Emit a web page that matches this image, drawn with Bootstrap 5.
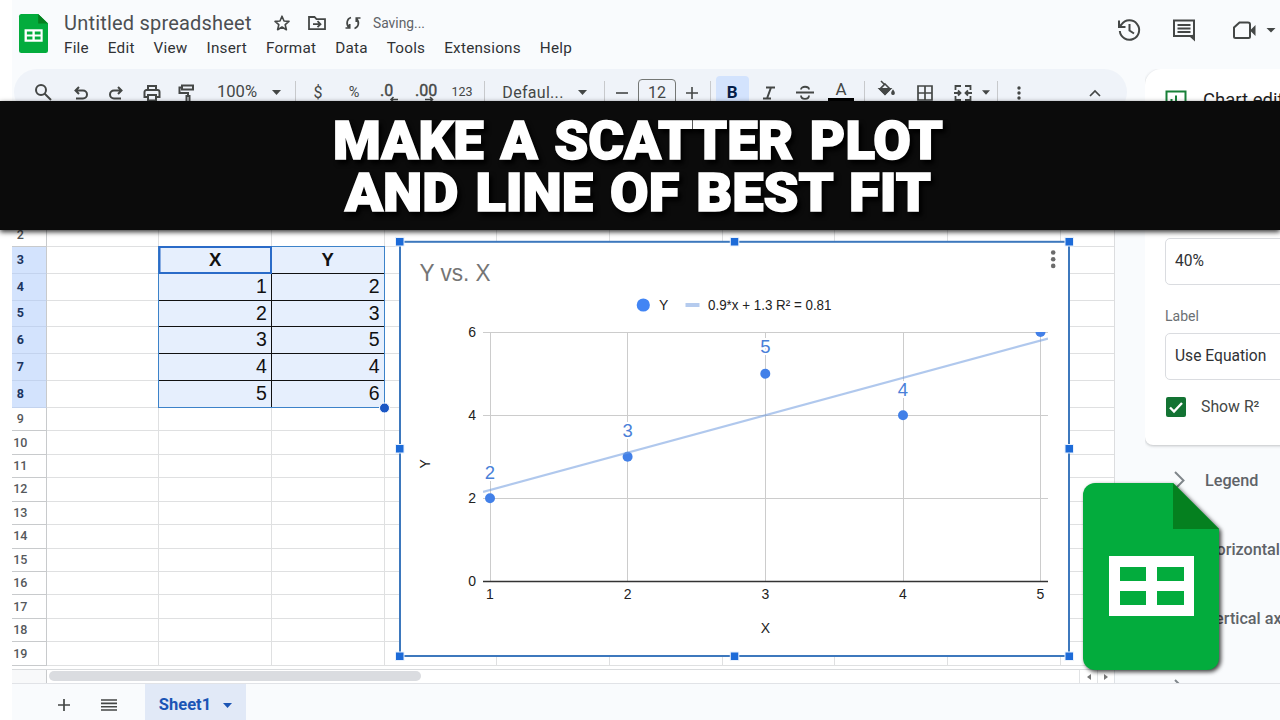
<!DOCTYPE html>
<html lang="en">
<head>
    <meta charset="UTF-8">
    <meta name="viewport" content="width=device-width, initial-scale=1.0">
    <title>Untitled spreadsheet</title>
    <link href="https://cdn.jsdelivr.net/npm/bootstrap@5.3.2/dist/css/bootstrap.min.css" rel="stylesheet">
    <script src="https://cdn.jsdelivr.net/npm/bootstrap@5.3.2/dist/js/bootstrap.bundle.min.js"></script>
    <style>
        body { font-family: Roboto, "Liberation Sans", sans-serif; background: #fff; color: #444746; }
        .page { width: 1280px; height: 720px; padding-left: 12px; }
        .app { background: #f9fbfd; height: 720px; }
        svg { display: block; flex: none; overflow: visible; }
        .ico { fill: none; stroke: #444746; stroke-width: 2; }

        /* header */
        .top-bar { height: 69px; flex: none; padding: 0 0 0 7px; }
        .doc-logo { margin-top: 14px; }
        .doc-info { margin-left: 16px; padding-top: 10px; }
        .doc-title { font-size: 20px; line-height: 26px; letter-spacing: .2px; color: #4c4f52; width: 210px; white-space: nowrap; }
        .menus { gap: 19px; font-size: 15.3px; line-height: 24px; letter-spacing: .21px; color: #303235; }
        .saving { font-size: 13.8px; color: #5f6368; margin-left: 11px; }
        .top-icons { padding-top: 18px; gap: 31px; margin-right: 2px; }
        .meet { margin-left: 6px; }
        .sync { margin-left: 18px; }

        /* toolbar */
        .tools { width: 1113px; height: 46px; margin-left: 2px; padding: 1px 0 0 8px; border-radius: 23px; background: #eff3f9; font-size: 16px; }
        .tool { height: 46px; width: 36px; display: flex; align-items: center; justify-content: center; flex: none; white-space: nowrap; }
        .t-search { width: 41px; }
        .t-edit .tool { width: 35.5px; }
        .t-style .tool { width: 36.4px; }
        .t-style .bold-on { width: 33px; }
        .t-cell .tool { width: 38px; }
        .t-zoom { width: 64px; font-size: 16.6px; }
        .t-percent { font-size: 14.5px; }
        .t-format { font-size: 12.5px; }
        .t-font { width: 84px; letter-spacing: .3px; }
        .t-caret { width: 15px; }
        .t-step { width: 26px; }
        .t-slim { width: 8px; }
        .t-up { width: 24px; margin-right: 20px; }
        .size-box { width: 38px; height: 27px; margin: 0 3px; border: 1px solid #747775; border-radius: 4px; }
        .bold-on { height: 34px; border-radius: 4px; background: #d3e3fd; color: #041e49; font-weight: 700; font-size: 17px; }
        .tb-sep { width: 1px; height: 23px; background: #c7c9cc; margin: 0 3px 0 4px; flex: none; }
        .sep-a { margin: 0 4px 0 11px; }
        .sep-b { margin: 0 6px 0 4px; }
        .sep-c { margin: 0 4px 0 14px; }
        .sep-d { margin: 0 3px 0 5px; }
        .sep-e { margin: 0 3px 0 7px; }

        /* grid */
        .left-pane { width: 1115px; }
        .sheet { width: 1103px; height: 554px; background: #fff; border-right: 1px solid #dcdddf; overflow: hidden; }
        .above-rows { height: 61.65px; }
        .grid-row { display: grid; grid-template-columns: 34.6px repeat(9, 112.67px) 1fr; height: 23.45px; }
        .grid-row.tall { height: 27px; }
        .grid-row.tall.short { height: 26px; }
        .grid-row > div { border-right: 1px solid #dfe0e1; border-bottom: 1px solid #dfe0e1; }
        .grid-row > div:last-child { border-right: 0; }
        .grid-row > .num { border-color: #c8cacc; font-size: 12.5px; font-weight: 500; color: #55585b; padding-right: 17px; display: flex; align-items: center; justify-content: center; line-height: 14px; }
        .grid-row.tall > .num { background: #d3e3fd; color: #1b3560; font-weight: 700; border-bottom-color: #c3d3ee; }
        .grid-row > .val { background: #e6effd; border-color: #111; color: #111; font: 19.5px/25px "Liberation Sans", Arial, sans-serif; text-align: right; padding-right: 4px; }
        .grid-row > .val.head { font-weight: 700; text-align: center; padding-right: 0; font-size: 18.5px; }
        .chart-box { left: 382px; top: 121px; }
        .range-box { left: 146px; top: 131px; }

        .scroll-row { height: 14px; width: 1103px; background: #fff; border-top: 1px solid #d9dbdd; }
        .scroll-corner { width: 35px; background: #f8f9fa; border-right: 1px solid #c8cacc; }
        .scroll-thumb { width: 372px; height: 10px; margin: 1px 0 0 2px; border-radius: 5px; background: #dadce0; }
        .scroll-btn { width: 18px; border-left: 1px solid #e1e3e5; }

        /* side panel */
        .side { width: 135px; height: 614px; margin-left: 18px; overflow: hidden; }
        .panel-box { width: 300px; height: 376px; background: #fff; border-radius: 16px 0 0 8px; box-shadow: 0 1px 3px rgba(60, 64, 67, .3); padding: 21px 0 0 20px; }
        .panel-title { height: 148px; font-size: 18.5px; line-height: 20px; color: #1f1f1f; gap: 16px; }
        .select-field { height: 47px; width: 220px; border: 1px solid #dadce0; border-radius: 5px; font-size: 15.6px; color: #303235; padding-left: 9px; }
        .field-name { font-size: 14px; line-height: 18px; color: #6b6f73; margin: 22px 0 8px; }
        .check { width: 20px; height: 20px; border-radius: 2px; background: #137333; margin-right: 15px; }
        .check-row { margin: 17px 0 0 1px; font-size: 15.8px; line-height: 20px; }
        .fold-list { width: 300px; height: 238px; padding-top: 1px; overflow: hidden; }
        .fold-item { height: 69.3px; padding-left: 29px; gap: 20px; font-size: 16.2px; font-weight: 500; color: #5f6368; white-space: nowrap; }

        /* bottom */
        .tabs-bar { height: 37px; flex: none; border-top: 1px solid #e1e3e7; background: #f9fbfd; padding-left: 46px; }
        .tab-icon { margin-top: 6px; }
        .all-sheets { margin-left: 31px; }
        .sheet-tab { width: 101px; height: 36px; padding-top: 6px; margin-left: 28px; gap: 12px; background: #e1e9f7; color: #1b55b5; font-size: 16.5px; font-weight: 700; }

        .banner { left: 0; top: 101px; width: 1280px; height: 129px; background: #0b0b0b; box-shadow: 0 2px 5px rgba(0, 0, 0, .8); }
        .banner text { font-family: Roboto, "Liberation Sans", sans-serif; font-weight: 900; font-size: 54px; word-spacing: 3px; fill: #fff; stroke: #fff; stroke-width: 1.6; }
        .banner svg { filter: drop-shadow(3px 4px 2px #000); }
        .big-logo { left: 1083px; top: 483px; filter: drop-shadow(2px 2px 2px rgba(0, 0, 0, .75)); }
        .chart-box text { font-family: "Liberation Sans", Arial, sans-serif; font-size: 14px; fill: #222; }
        .chart-box .pt-label { font-size: 18.5px; fill: #4a80d8; stroke: #fff; stroke-width: 4px; paint-order: stroke; }
        .chart-box .chart-title { font-size: 24px; fill: #757575; }
    </style>
</head>
<body>
<div class="page position-relative overflow-hidden">
    <div class="app d-flex flex-column overflow-hidden">

        <header class="top-bar d-flex align-items-start">
            <svg class="doc-logo" width="29" height="39" viewBox="0 0 136 187" preserveAspectRatio="none">
                <path d="M12 0H90L136 46V175a12 12 0 0 1-12 12H12A12 12 0 0 1 0 175V12A12 12 0 0 1 12 0Z" fill="#03ac3d"/>
                <path d="M90 0L136 46H90Z" fill="#05801f"/>
                <path d="M26 73H111V133H26ZM37 84V98H63V84ZM74 84V98H101V84ZM37 108V122H63V108ZM74 108V122H101V108Z" fill="#fff" fill-rule="evenodd"/>
            </svg>
            <div class="doc-info">
                <div class="d-flex align-items-center">
                    <div class="doc-title">Untitled spreadsheet</div>
                    <svg class="ico" width="16" height="16" viewBox="0 0 16 16" stroke-linejoin="round"><path stroke-width="1.6" d="M8 1.2L10 6l5 .4-3.8 3.3 1.2 5L8 12l-4.4 2.7 1.2-5L1 6.4 6 6Z"/></svg>
                    <svg class="ico ms-3" width="20" height="16" viewBox="0 0 20 16"><path stroke-width="1.8" d="M3 2h5.500l2 2.200h8.500V14.200H3ZM7 9.200h7M11.500 6.200l3 3-3 3"/></svg>
                    <svg class="ico sync" width="18" height="16" viewBox="0 0 18 16"><path stroke-width="1.7" d="M7 2.500C3 3.500 1.600 9 5 12.500M1.500 13h4.200V9M10.500 13.500c4-1 5.400-6.500 2-10M16.500 3h-4.200v4"/></svg>
                    <span class="saving">Saving...</span>
                </div>
                <nav class="menus d-flex">
                    <span>File</span><span>Edit</span><span>View</span><span>Insert</span><span>Format</span><span>Data</span><span>Tools</span><span>Extensions</span><span>Help</span>
                </nav>
            </div>
            <div class="top-icons d-flex align-items-center ms-auto">
                <svg class="ico" width="24" height="24" viewBox="0 0 24 24"><path d="M2.800 13A9.700 9.700 0 1 0 4.500 6.500L2 9M2 2.500V9h6.500M12.500 6v6.500l4.500 3"/></svg>
                <svg class="ico" width="24" height="24" viewBox="0 0 24 24"><path d="M2 2.500H22V20L19.500 18H2ZM5.500 7h13M5.500 10.500h13M5.500 14h13"/><path d="M17 18l6 5.500V16Z" fill="#444746" stroke="none"/></svg>
                <div class="meet d-flex align-items-center">
                    <svg class="ico" width="22" height="24" viewBox="0 0 22 24"><path d="M6.500 4.500H15a2 2 0 0 1 2 2v12a1.500 1.500 0 0 1-1.500 1.500H2.500A1.500 1.500 0 0 1 1 18.500V9.500Z"/><path d="M17 12.500l5.500-5.500v11Z" fill="#444746" stroke="none"/></svg>
                    <svg class="ms-2" width="15" height="6" viewBox="0 0 15 6"><path d="M3.500 1H12.500L8 5.500Z" fill="#444746"/></svg>
                </div>
            </div>
        </header>

        <div class="d-flex flex-grow-1">
            <main class="left-pane">
                <div class="tools d-flex align-items-center">
                    <div class="tool t-search"><svg class="ico" width="18" height="18" viewBox="0 0 18 18"><circle cx="7" cy="6" r="5"/><path d="M10.500 9.500L17 16"/></svg></div>
                    <div class="t-edit d-flex">
                        <div class="tool"><svg class="ico" width="16" height="14" viewBox="0 0 16 14"><path d="M6 1L2.500 4.500 6 8M3 4.500H10a4 4 0 0 1 0 8H3"/></svg></div>
                        <div class="tool"><svg class="ico" width="16" height="14" viewBox="0 0 16 14"><path d="M10 1l3.500 3.500L10 8M13 4.500H6a4 4 0 0 0 0 8h7"/></svg></div>
                        <div class="tool"><svg class="ico" width="18" height="18" viewBox="0 0 18 18"><path d="M5 6V2H13V6M5 13H1.500V8a2 2 0 0 1 2-2H14.500a2 2 0 0 1 2 2v5H13M5 11H13V16.500H5Z"/></svg></div>
                        <div class="tool"><svg class="ico" width="18" height="18" viewBox="0 0 18 18"><path d="M4 1.500H15V5.500H4ZM4 3.500H1.500V9H10V12M8.500 12h3v7h-3Z"/></svg></div>
                    </div>
                    <div class="tool t-zoom">100%</div>
                    <div class="tool t-caret"><svg width="9" height="5" viewBox="0 0 9 5"><path d="M0 0H9L4.500 5Z" fill="#444746"/></svg></div>
                    <div class="tb-sep sep-a"></div>
                    <div class="tool">$</div>
                    <div class="tool t-percent">%</div>
                    <div class="tool"><svg class="ico" width="20" height="20" viewBox="0 0 20 20"><text x="0" y="13" font-size="16" fill="#444746" stroke="#444746" stroke-width=".4">.0</text><path stroke-width="1.6" d="M18 16.500H11M13.500 14l-2.500 2.500 2.500 2.500"/></svg></div>
                    <div class="tool"><svg class="ico" width="22" height="20" viewBox="0 0 22 20"><text x="0" y="13" font-size="16" fill="#444746" stroke="#444746" stroke-width=".4">.00</text><path stroke-width="1.6" d="M10 16.500h8M15 14l2.500 2.500-2.500 2.500"/></svg></div>
                    <div class="tool t-format">123</div>
                    <div class="tb-sep sep-b"></div>
                    <div class="tool t-font">Defaul...</div>
                    <div class="tool t-caret"><svg width="9" height="5" viewBox="0 0 9 5"><path d="M0 0H9L4.500 5Z" fill="#444746"/></svg></div>
                    <div class="tb-sep sep-c"></div>
                    <div class="tool t-step"><svg class="ico" width="12" height="12" viewBox="0 0 12 12"><path stroke-width="1.6" d="M0 6H12"/></svg></div>
                    <div class="tool size-box">12</div>
                    <div class="tool t-step"><svg class="ico" width="12" height="12" viewBox="0 0 12 12"><path stroke-width="1.6" d="M0 6H12M6 0V12"/></svg></div>
                    <div class="tb-sep sep-d"></div>
                    <div class="t-style d-flex">
                        <div class="tool"><div class="tool bold-on">B</div></div>
                        <div class="tool"><svg class="ico" width="14" height="14" viewBox="0 0 14 14"><path d="M4 1.500H13M1 12.500H9M9 1.500L5 12.500"/></svg></div>
                        <div class="tool"><svg class="ico" width="18" height="16" viewBox="0 0 18 16"><path stroke-width="1.8" d="M0 7.500H18M5 4.500C5 .8 13 .8 13 4.500M5 10.500c0 4.500 8 4.500 8 0"/></svg></div>
                        <div class="tool"><svg width="26" height="26" viewBox="0 0 26 26"><text x="13" y="14.500" text-anchor="middle" font-size="17" fill="#444746">A</text><rect y="18" width="26" height="5"/></svg></div>
                    </div>
                    <div class="tb-sep"></div>
                    <div class="t-cell d-flex">
                        <div class="tool"><svg class="ico" width="18" height="24" viewBox="0 0 18 24"><path stroke-width="1.6" d="M3 0l3 3M7 3l5 5-5 5-5-5Z"/><path d="M2 8H12L7 13ZM15 10c3 4-3 4 0 0Z" fill="#444746"/></svg></div>
                        <div class="tool"><svg class="ico" width="16" height="16" viewBox="0 0 16 16"><path stroke-width="1.7" d="M1 1H15V15H1ZM8 1V15M1 8H15"/></svg></div>
                        <div class="tool"><svg class="ico" width="18" height="16" viewBox="0 0 18 16"><path stroke-width="1.8" d="M7 1H1.500V5M11 1h5.500V5M7 15H1.500V11M11 15h5.500V11M0 8H6M18 8H12M4 5.500L6.500 8 4 10.500M14 5.500L11.500 8l2.500 2.500"/></svg></div>
                    </div>
                    <div class="tool t-slim"><svg width="8" height="5" viewBox="0 0 9 5"><path d="M0 0H9L4.500 5Z" fill="#444746"/></svg></div>
                    <div class="tb-sep sep-e"></div>
                    <div class="tool"><svg width="4" height="14" viewBox="0 0 4 14" fill="#444746"><circle cx="2" cy="2" r="1.700"/><circle cx="2" cy="7" r="1.700"/><circle cx="2" cy="12" r="1.700"/></svg></div>
                    <div class="tool t-up ms-auto"><svg class="ico" width="12" height="8" viewBox="0 0 12 8"><path stroke-width="1.7" d="M1 7l5-5 5 5"/></svg></div>
                </div>

                <div class="sheet position-relative">
                    <div class="above-rows"></div>
                    <div id="rows"></div>

                    <!-- outline of the selected range -->
                    <svg class="range-box position-absolute" width="232" height="168" viewBox="158 246 232 168">
                        <rect x="158.500" y="246.500" width="226" height="161" fill="none" stroke="#3c82c9"/>
                        <rect x="159.500" y="247" width="111.500" height="26" fill="none" stroke="#2a6bc8" stroke-width="2"/>
                        <circle cx="384.500" cy="408" r="5" fill="#1a56c4" stroke="#fff"/>
                    </svg>

                    <svg class="chart-box position-absolute" width="681" height="426" viewBox="394 236 681 426">
                        <rect x="400" y="241.800" width="669" height="414.200" fill="#fff" stroke="#3d78bd" stroke-width="2"/>
                        <text class="chart-title" x="419.500" y="280.500" textLength="71" lengthAdjust="spacingAndGlyphs">Y vs. X</text>
                        <g fill="#6b6b6b"><circle cx="1053.200" cy="252.500" r="2.300"/><circle cx="1053.200" cy="259.200" r="2.300"/><circle cx="1053.200" cy="265.900" r="2.300"/></g>
                        <circle cx="643.300" cy="305" r="6.600" fill="#4285f4"/>
                        <text x="659" y="309.500">Y</text>
                        <rect x="685.500" y="303" width="14" height="4" fill="#b5cbee"/>
                        <text x="708" y="309.500" textLength="123.500" lengthAdjust="spacingAndGlyphs">0.9*x + 1.3 R² = 0.81</text>
                        <path d="M483 332.500H1048M483 415.500H1048M483 498.500H1048M490.500 332V581M627.500 332V581M765.500 332V581M903.500 332V581M1040.500 332V581" stroke="#ccc" fill="none"/>
                        <path d="M483 581.500H1048" stroke="#333" stroke-width="1.300"/>
                        <clipPath id="plot"><rect x="483" y="332" width="565" height="250"/></clipPath>
                        <g clip-path="url(#plot)">
                            <g fill="#4280e8"><circle cx="490" cy="498.300" r="5"/><circle cx="627.600" cy="456.700" r="5"/><circle cx="765.300" cy="373.700" r="5"/><circle cx="903" cy="415.300" r="5"/><circle cx="1040.500" cy="332" r="5"/></g>
                            <path d="M483 492L1048 338.500" stroke="#6f9bdf" stroke-opacity=".55" stroke-width="2.200"/>
                        </g>
                        <g text-anchor="middle">
                            <text class="pt-label" x="490" y="478.500">2</text><text class="pt-label" x="627.600" y="437">3</text><text class="pt-label" x="765.500" y="353">5</text><text class="pt-label" x="903" y="395.500">4</text>
                            <text x="490" y="599">1</text><text x="627.600" y="599">2</text><text x="765.500" y="599">3</text><text x="903" y="599">4</text><text x="1040.500" y="599">5</text>
                            <text x="765.300" y="632.500">X</text>
                            <text transform="translate(430.300 463.800) rotate(-90)">Y</text>
                        </g>
                        <g text-anchor="end">
                            <text x="476" y="336.500">6</text><text x="476" y="419.500">4</text><text x="476" y="502.500">2</text><text x="476" y="585.500">0</text>
                        </g>
                        <g fill="#1d6bd8" stroke="#e8f1fd">
                            <rect x="395.500" y="237.500" width="8.500" height="8.500"/><rect x="730.300" y="237.500" width="8.500" height="8.500"/><rect x="1065" y="237.500" width="8.500" height="8.500"/>
                            <rect x="395.500" y="444.500" width="8.500" height="8.500"/><rect x="1065" y="444.500" width="8.500" height="8.500"/>
                            <rect x="395.500" y="652" width="8.500" height="8.500"/><rect x="730.300" y="652" width="8.500" height="8.500"/><rect x="1065" y="652" width="8.500" height="8.500"/>
                        </g>
                    </svg>
                </div>

                <div class="scroll-row d-flex">
                    <div class="scroll-corner"></div>
                    <div class="scroll-thumb"></div>
                    <div class="scroll-btn ms-auto d-flex align-items-center justify-content-center"><svg width="4" height="6" viewBox="0 0 4 6"><path d="M4 0V6L0 3Z" fill="#777"/></svg></div>
                    <div class="scroll-btn border-end d-flex align-items-center justify-content-center"><svg width="4" height="6" viewBox="0 0 4 6"><path d="M0 0V6L4 3Z" fill="#777"/></svg></div>
                </div>
            </main>

            <aside class="side">
                <div class="panel-box">
                    <div class="panel-title d-flex">
                        <svg width="22" height="22" viewBox="0 0 22 22" fill="none" stroke="#188038" stroke-width="2"><path d="M1.500 1.500H20.500V20.500H1.500ZM6.500 9V17M11 5.500V17M15.500 12V17"/></svg>
                        <span class="text-nowrap">Chart editor</span>
                    </div>
                    <div class="select-field d-flex align-items-center">40%</div>
                    <div class="field-name">Label</div>
                    <div class="select-field d-flex align-items-center">Use Equation</div>
                    <div class="check-row d-flex align-items-center">
                        <div class="check"><svg width="20" height="20" viewBox="0 0 20 20"><path d="M4 10.500L8 14.500 16 6" fill="none" stroke="#fff" stroke-width="2.400"/></svg></div>
                        <span>Show R²</span>
                    </div>
                </div>
                <div class="fold-list">
                    <div class="fold-item d-flex align-items-center"><svg class="ico" width="11" height="19" viewBox="0 0 11 19"><path stroke="#80868b" d="M1 1l8.500 8.500L1 18"/></svg>Legend</div>
                    <div class="fold-item d-flex align-items-center"><svg class="ico" width="11" height="19" viewBox="0 0 11 19"><path stroke="#80868b" d="M1 1l8.500 8.500L1 18"/></svg>Horizontal axis</div>
                    <div class="fold-item d-flex align-items-center"><svg class="ico" width="11" height="19" viewBox="0 0 11 19"><path stroke="#80868b" d="M1 1l8.500 8.500L1 18"/></svg>Vertical axis</div>
                    <div class="fold-item d-flex align-items-center"><svg class="ico" width="11" height="19" viewBox="0 0 11 19"><path stroke="#80868b" d="M1 1l8.500 8.500L1 18"/></svg></div>
                </div>
            </aside>
        </div>

        <footer class="tabs-bar d-flex align-items-center">
            <svg class="ico tab-icon" width="12" height="12" viewBox="0 0 12 12"><path stroke-width="1.7" d="M0 6H12M6 0V12"/></svg>
            <svg class="ico tab-icon all-sheets" width="16" height="12" viewBox="0 0 16 12"><path stroke-width="1.6" d="M0 1H16M0 4.400H16M0 7.700H16M0 11H16"/></svg>
            <div class="sheet-tab d-flex align-items-center justify-content-center">Sheet1
                <svg width="9" height="5" viewBox="0 0 9 5"><path d="M0 0H9L4.500 5Z" fill="#1b55b5"/></svg>
            </div>
        </footer>
    </div>

    <svg class="big-logo position-absolute" width="136" height="187" viewBox="0 0 136 187">
        <path d="M12 0H90L136 46V175a12 12 0 0 1-12 12H12A12 12 0 0 1 0 175V12A12 12 0 0 1 12 0Z" fill="#03ac3d"/>
        <path d="M90 0L136 46H90Z" fill="#05801f"/>
        <path d="M26 73H111V133H26ZM37 84V98H63V84ZM74 84V98H101V84ZM37 108V122H63V108ZM74 108V122H101V108Z" fill="#fff" fill-rule="evenodd"/>
    </svg>

    <div class="banner position-absolute">
        <svg width="1280" height="129" viewBox="0 101 1280 129">
            <text x="333" y="159" textLength="610" lengthAdjust="spacingAndGlyphs">MAKE A SCATTER PLOT</text>
            <text x="345" y="211" textLength="586" lengthAdjust="spacingAndGlyphs">AND LINE OF BEST FIT</text>
        </svg>
    </div>
</div>

<script>
    // cell values in columns B and C, by row number
    const values = { 3: ["X", "Y"], 4: [1, 2], 5: [2, 3], 6: [3, 5], 7: [4, 4], 8: [5, 6] };
    const rows = document.getElementById("rows");
    for (let n = 0; n <= 19; n++) {
        const row = document.createElement("div");
        row.className = "grid-row" + (values[n] ? " tall" : "") + (n === 5 ? " short" : "");
        let cells = `<div class="num">${n || ""}</div>`;
        for (let c = 0; c < 10; c++) {
            const v = values[n] && (c === 1 || c === 2) ? values[n][c - 1] : null;
            cells += v === null ? "<div></div>" : `<div class="val${n === 3 ? " head" : ""}">${v}</div>`;
        }
        row.innerHTML = cells;
        rows.appendChild(row);
    }
</script>
</body>
</html>
